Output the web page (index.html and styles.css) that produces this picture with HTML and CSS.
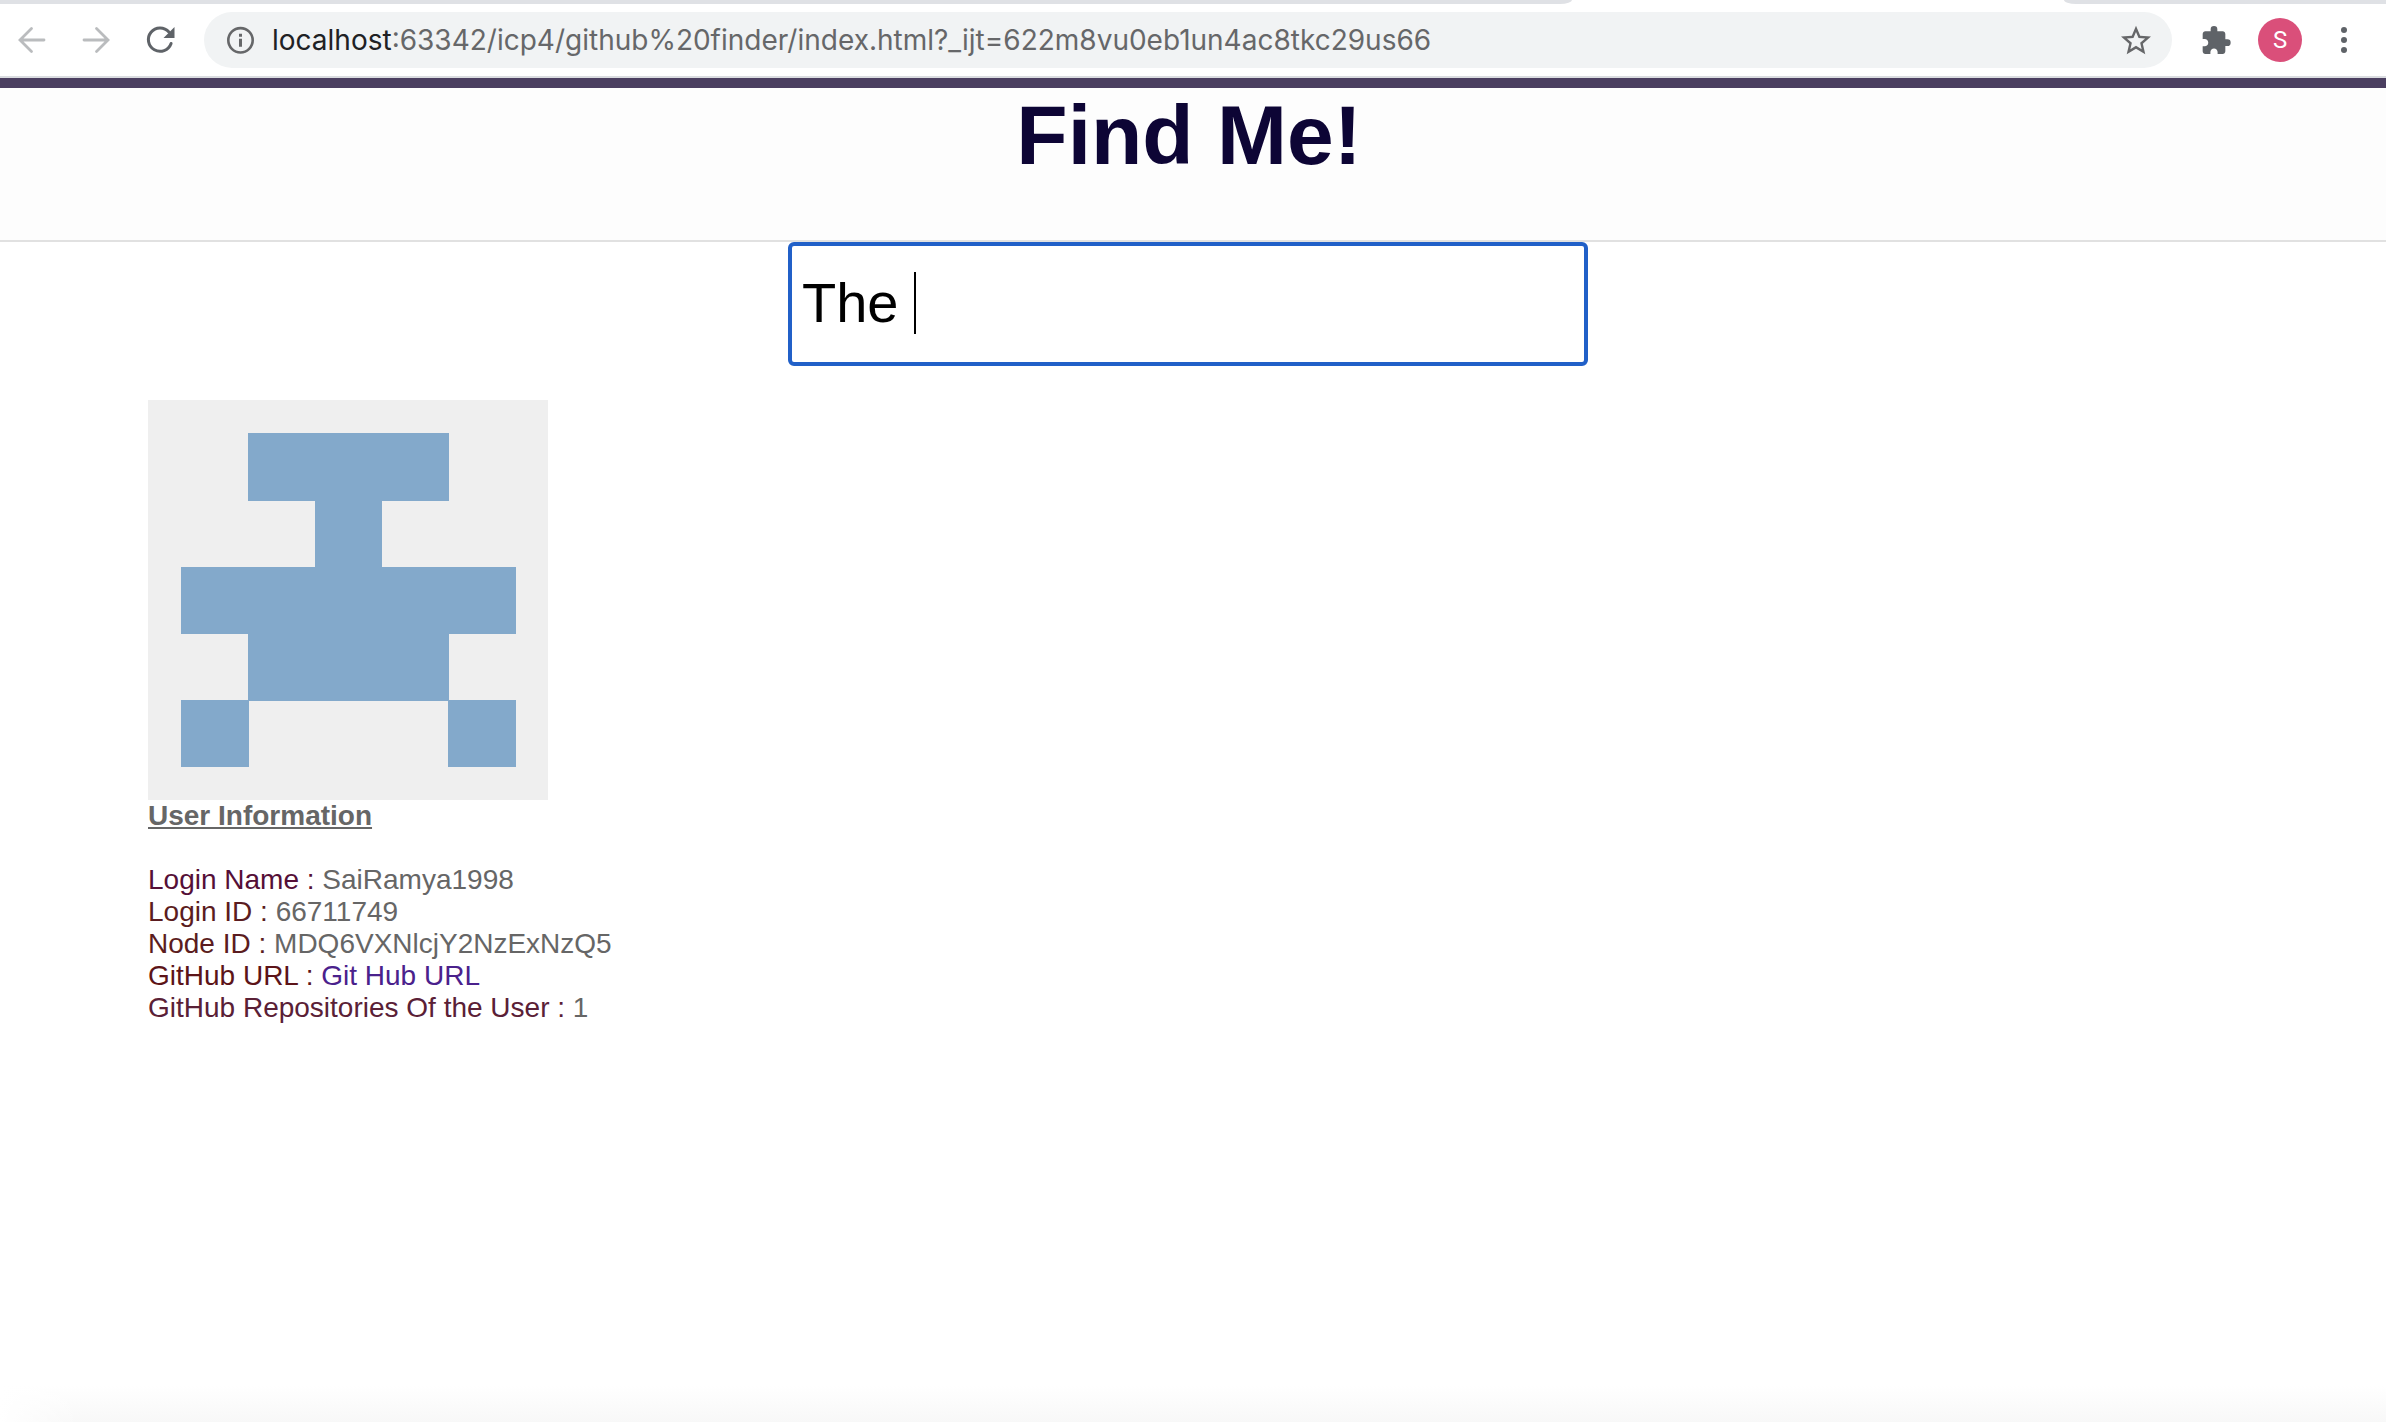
FILE: index.html
```html
<!DOCTYPE html>
<html lang="en">
<head>
<meta charset="utf-8">
<title>Find Me!</title>
<link rel="stylesheet" href="styles.css">
</head>
<body>
<div class="tab-strip">
  <div class="tabs-before"></div>
  <div class="tab-active"></div>
  <div class="tabs-after"></div>
</div>
<nav class="toolbar" aria-label="Browser toolbar">
  <div class="tool-group">
    <button class="tool muted" type="button" aria-label="Back">
      <svg width="40" height="40" viewBox="0 0 40 40"><path d="M32 20H8.500M19.500 8.500L8 20l11.500 11.500" fill="none" stroke="currentColor" stroke-width="2.800" stroke-linecap="round"/></svg>
    </button>
    <button class="tool muted" type="button" aria-label="Forward">
      <svg width="40" height="40" viewBox="0 0 40 40"><path d="M8 20h23.500M20.500 8.500L32 20 20.500 31.500" fill="none" stroke="currentColor" stroke-width="2.800" stroke-linecap="round"/></svg>
    </button>
    <button class="tool" type="button" aria-label="Reload">
      <svg width="40" height="40" viewBox="-0.500 0 40 40"><path d="M30.600 23.500A11.700 11.700 0 1 1 28.400 11.900" fill="none" stroke="currentColor" stroke-width="3" stroke-linecap="round"/><path d="M34 7v11H23z" fill="currentColor"/></svg>
    </button>
  </div>
  <div class="address-bar">
    <button class="icon-button" type="button" aria-label="Site information">
      <svg width="28" height="28" viewBox="-0.500 -0.300 28 28"><circle cx="14" cy="14" r="12.200" fill="none" stroke="currentColor" stroke-width="2.600"/><path d="M12.500 7.500h3v3h-3zM12.500 12.500h3v8h-3z" fill="currentColor"/></svg>
    </button>
    <label class="host" for="address">localhost</label>
    <input class="address" id="address" type="text" spellcheck="false" value=":63342/icp4/github%20finder/index.html?_ijt=622m8vu0eb1un4ac8tkc29us66">
    <button class="icon-button" type="button" aria-label="Bookmark this page">
      <svg width="36" height="36" viewBox="0 -0.500 24 24"><path fill="currentColor" d="M22 9.240l-7.190-.62L12 2 9.190 8.630 2 9.240l5.460 4.730L5.820 21 12 17.270 18.180 21l-1.630-7.030L22 9.240zM12 15.400l-3.760 2.270 1-4.280-3.320-2.880 4.380-.38L12 6.100l1.710 4.040 4.380.38-3.320 2.880 1 4.280L12 15.400z"/></svg>
    </button>
  </div>
  <div class="tool-group">
    <button class="tool" type="button" aria-label="Extensions">
      <svg width="32" height="32" viewBox="0 -0.500 24 24"><path fill="currentColor" d="M20.500 11H19V7c0-1.100-.9-2-2-2h-4V3.500a2.500 2.500 0 0 0-5 0V5H4c-1.100 0-1.990.9-1.990 2v3.800H3.500c1.490 0 2.700 1.210 2.700 2.700s-1.210 2.700-2.700 2.700H2V20c0 1.100.9 2 2 2h3.800v-1.500c0-1.490 1.210-2.700 2.700-2.700s2.700 1.210 2.700 2.700V22H17c1.100 0 2-.9 2-2v-4h1.500a2.500 2.500 0 0 0 0-5z"/></svg>
    </button>
    <button class="tool" type="button" aria-label="Profile"><span class="profile">S</span></button>
    <button class="tool" type="button" aria-label="Menu">
      <svg width="40" height="40" viewBox="0 0 40 40"><g fill="currentColor"><circle cx="20" cy="10" r="3"/><circle cx="20" cy="20" r="3"/><circle cx="20" cy="30" r="3"/></g></svg>
    </button>
  </div>
</nav>

<header class="page-header">
  <h1 class="title">Find Me!</h1>
</header>
<main class="content">
  <div class="search">
    <input class="search-input" type="text" aria-label="GitHub username" value="The ">
    <span class="caret"></span>
  </div>
  <section class="profile-card">
    <svg class="avatar" width="400" height="400" viewBox="0 0 400 400" role="img" aria-label="User avatar">
      <path fill="#efefef" d="M0 0h400v400H0z"/>
      <path fill="#83a9cb" d="M100 33h201v68h-67v66h134v67h-67v67H100v-67H33v-67h134v-66h-67zM33 300h68v67H33zM300 300h68v67h-68z"/>
    </svg>
    <h2 class="card-title">User Information</h2>
    <div><span class="label-plum">Login Name :</span> SaiRamya1998</div>
    <div><span class="label-brown">Login ID :</span> 66711749</div>
    <div><span class="label-brown">Node ID :</span> MDQ6VXNlcjY2NzExNzQ5</div>
    <div><span class="label-red">GitHub URL :</span> <a class="link" href="#">Git Hub URL</a></div>
    <div><span class="label-wine">GitHub Repositories Of the User :</span> 1</div>
  </section>
</main>
<div class="bottom-shade"></div>
</body>
</html>
```
FILE: styles.css
```css
* {
  box-sizing: border-box;
}

body {
  display: flex;
  flex-direction: column;
  min-height: 100vh;
  margin: 0;
  background: #fff;
  color: #666;
  font: 28px/32px "Liberation Sans", Arial, sans-serif;
}

button,
input {
  border: 0;
  padding: 0;
  background: none;
  font: inherit;
  color: inherit;
}

svg {
  display: block;
}

/* Browser chrome */
.tab-strip {
  display: flex;
  height: 4px;
}

.tabs-before,
.tabs-after {
  background: #dfe1e5;
}

.tabs-before {
  flex: 1572;
  border-bottom-right-radius: 12px 4px;
}

.tab-active {
  flex: 492;
}

.tabs-after {
  flex: 322;
  border-bottom-left-radius: 12px 4px;
}

.toolbar {
  display: flex;
  align-items: center;
  gap: 12px;
  height: 74px;
  padding-right: 10px;
  border-bottom: 2px solid #dadce0;
  color: #5f6368;
}

.tool-group {
  display: flex;
}

.tool {
  display: flex;
  align-items: center;
  justify-content: center;
  width: 64px;
  height: 56px;
}

.muted {
  color: #babcbe;
}

.address-bar {
  display: flex;
  flex: 1;
  align-items: center;
  height: 56px;
  padding: 0 18px 0 22px;
  border-radius: 28px;
  background: #f1f3f4;
  color: #666769;
  font-family: Inter, sans-serif;
}

.icon-button {
  flex: none;
}

.host {
  margin-left: 18px;
  color: #202124;
}

.address {
  flex: 1;
  min-width: 0;
  height: 56px;
  outline: none;
}

.profile {
  width: 44px;
  height: 44px;
  border-radius: 50%;
  background: #da4f7a;
  color: #fff;
  font: 24px/44px Roboto, sans-serif;
}

/* Page */
.page-header {
  height: 164px;
  padding-right: 8px;
  border-top: 10px solid #4b3f60;
  border-bottom: 2px solid #e1e1e1;
  background: #fdfdfd;
  text-align: center;
}

.title {
  margin: 0;
  color: #0d0535;
  font-size: 84px;
  line-height: 94px;
}

.content {
  flex: 1;
  padding-right: 10px;
}

.search {
  position: relative;
  width: 800px;
  max-width: 100%;
  margin: 0 auto;
}

.search-input {
  display: block;
  width: 100%;
  height: 124px;
  padding: 0 10px 4px;
  border: 4px solid #2160c8;
  border-radius: 6px;
  outline: none;
  background: #fff;
  color: #000;
  font-size: 56px;
}

.caret {
  position: absolute;
  top: 30px;
  left: 126px;
  width: 2px;
  height: 62px;
  background: #000;
}

.profile-card {
  margin: 34px 148px 0;
}

.card-title {
  margin: 0 0 32px;
  font-size: 28px;
  line-height: 32px;
  text-decoration: underline;
}

.label-plum {
  color: #550f37;
}

.label-brown {
  color: #5b1c20;
}

.label-red {
  color: #5c1418;
}

.label-wine {
  color: #5a2036;
}

.link {
  color: #4a218c;
  text-decoration: none;
}

.bottom-shade {
  height: 36px;
  background: linear-gradient(to right, #fff, transparent 80px), linear-gradient(#fff, #f8f8f8);
}
```
